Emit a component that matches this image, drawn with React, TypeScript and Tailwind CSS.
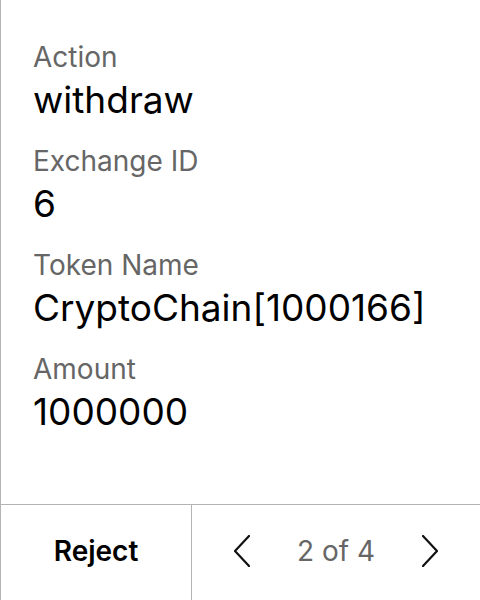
const fields = [
  { label: 'Action', value: 'withdraw' },
  { label: 'Exchange ID', value: '6' },
  { label: 'Token Name', value: 'CryptoChain[1000166]' },
  { label: 'Amount', value: '1000000' },
];

function Chevron({ dir }: { dir: 'left' | 'right' }) {
  return (
    <svg width="16" height="32" viewBox="0 0 16 32" fill="none" stroke="#111" strokeWidth="2.2" strokeLinecap="round" strokeLinejoin="round">
      {dir === 'left' ? <path d="M15 1 L1 16 L15 31" /> : <path d="M1 1 L15 16 L1 31" />}
    </svg>
  );
}

export default function App() {
  return (
    <div
      className="flex h-[600px] w-[480px] flex-col border-l border-[#b3b3b3] bg-white text-black"
      style={{ fontFamily: 'Inter, "Noto Sans", sans-serif' }}
    >
      <div className="flex flex-1 flex-col gap-[22px] pl-[32px] pt-[40px]">
        {fields.map((f) => (
          <div key={f.label} className="flex flex-col gap-[4px]">
            <div className="text-[28px] leading-[34px] text-[#666666]">{f.label}</div>
            <div className="text-[37px] leading-[44px] text-black">{f.value}</div>
          </div>
        ))}
      </div>

      <div className="flex h-[96px] border-t border-[#b3b3b3]">
        <button className="flex w-[191px] items-center justify-center border-r border-[#b3b3b3] pb-[3px] text-[28px] font-semibold text-black">
          Reject
        </button>
        <div className="flex flex-1 items-center justify-center gap-[47px] pb-[3px]">
          <Chevron dir="left" />
          <span className="text-[28px] text-[#666666]">2 of 4</span>
          <Chevron dir="right" />
        </div>
      </div>
    </div>
  );
}
